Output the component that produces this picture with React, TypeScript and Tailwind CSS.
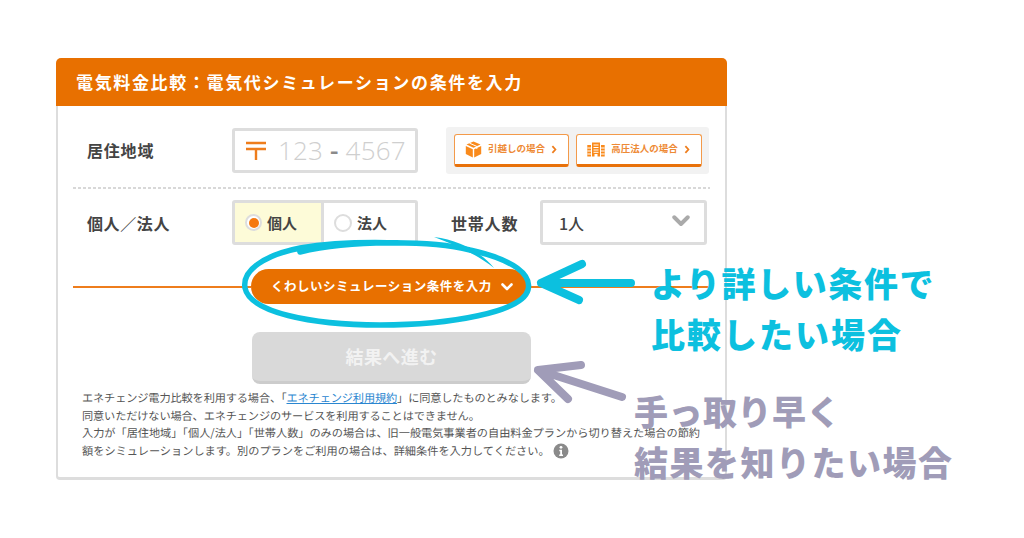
const jp = { fontFamily: '"Noto Sans CJK JP", "Noto Sans", sans-serif' };

function BoxIcon() {
  return (
    <svg width="17" height="17" viewBox="0 0 17 17" className="shrink-0">
      <path d="M8.5 0.5 L15.5 3.5 L8.5 6.8 L1.5 3.5 Z" fill="#f98a1c" />
      <path d="M0.8 5 L7.8 8.2 V16.6 L0.8 13 Z" fill="#f98a1c" />
      <path d="M16.2 5 L9.2 8.2 V16.6 L16.2 13 Z" fill="#f98a1c" />
      <path d="M4.5 2.2 L11.8 5.4 V8" stroke="#fff" strokeWidth="1" fill="none" />
    </svg>
  );
}

function BuildingIcon() {
  return (
    <svg width="18" height="15" viewBox="0 0 18 15" className="shrink-0">
      <path d="M5 0.5 H13 V14.5 H10.5 V12 H7.5 V14.5 H5 Z" fill="#f98a1c" />
      <path d="M6.5 3H11.5M6.5 5.5H11.5M6.5 8H11.5M6.5 10.3H11.5" stroke="#fff" strokeWidth="1" />
      <path d="M0.3 3 H4 V14.5 H0.3 Z M14 3 H17.7 V14.5 H14 Z" fill="#f98a1c" />
      <path d="M0.3 6H4M0.3 9H4M0.3 12H4M14 6H17.7M14 9H17.7M14 12H17.7" stroke="#fff" strokeWidth="1" />
    </svg>
  );
}

function Chevron({ className, stroke, w }: { className?: string; stroke: string; w: number }) {
  return (
    <svg viewBox="0 0 12 8" className={className}>
      <path d="M1.5 1.5 L6 6 L10.5 1.5" fill="none" stroke={stroke} strokeWidth={w} strokeLinecap="round" strokeLinejoin="round" />
    </svg>
  );
}

function Small({ children, width, icon }: { children: React.ReactNode; width: string; icon: React.ReactNode }) {
  return (
    <div className={`${width} h-[33px] flex items-center justify-center gap-[6px] bg-white border border-[#f39a4a] border-b-[3px] border-b-[#e8710a] rounded-[3px]`}>
      {icon}
      <span className="text-[9.5px] font-bold text-[#ee8a35] leading-none">{children}</span>
      <svg viewBox="0 0 6 10" className="w-[6px] h-[9px]">
        <path d="M1.2 1.2 L4.6 5 L1.2 8.8" fill="none" stroke="#ee7d1c" strokeWidth="1.9" />
      </svg>
    </div>
  );
}

export default function App() {
  return (
    <div className="relative w-[1024px] h-[538px] overflow-hidden bg-white pt-[58px] pl-[56px]" style={jp}>
      <div className="w-[671px] flex flex-col">
        <div className="h-[48px] flex items-center pl-[20px] bg-[#e87000] rounded-t-[5px] text-white text-[17px] font-bold tracking-[1.65px] pb-[1px] whitespace-nowrap">
          電気料金比較：電気代シミュレーションの条件を入力
        </div>
        <div className="h-[374px] border-x-[2px] border-b-[3px] border-[#dddddd] rounded-b-[4px] px-[15px]">
          <div className="h-[81px] flex items-center pt-[7px]">
            <div className="w-[159px] pl-[14px] text-[16px] font-bold text-[#444] tracking-[0.8px]">居住地域</div>
            <div className="w-[186px] h-[45px] border-[3px] border-[#dddddd] rounded-[3px] flex items-center pl-[11px]">
              <svg width="20" height="19" viewBox="0 0 20 19" className="shrink-0">
                <path d="M0 2H20M0 8H20M10 8V19" stroke="#ee7d1c" strokeWidth="2.4" fill="none" />
              </svg>
              <span className="ml-[12px] text-[26px] font-light text-[#cfcfcf] tracking-[0.2px] leading-none whitespace-pre" style={{ fontFamily: '"Open Sans", sans-serif' }}>
                123 <span className="font-semibold text-[#8a8a8a]">-</span> 4567
              </span>
            </div>
            <div className="ml-[28px] w-[263px] h-[47px] bg-[#f2f2f2] rounded-[3px] flex items-center justify-center gap-[7px]">
              <Small width="w-[115px]" icon={<BoxIcon />}>引越しの場合</Small>
              <Small width="w-[126px]" icon={<BuildingIcon />}>高圧法人の場合</Small>
            </div>
          </div>
          <div className="h-[2px] bg-[repeating-linear-gradient(90deg,#d8d8d8_0,#d8d8d8_3px,transparent_3px,transparent_5px)]" />
          <div className="mt-[11px] h-[45px] flex items-center">
            <div className="w-[159px] pl-[14px] text-[16px] font-bold text-[#444] tracking-[0.6px]">個人／法人</div>
            <div className="w-[186px] h-[45px] border-[3px] border-[#dddddd] rounded-[3px] flex">
              <div className="w-[89px] bg-[#fdfbd8] border-r-[3px] border-[#dddddd] flex items-center pl-[10px] gap-[5px]">
                <div className="w-[17px] h-[17px] rounded-full border-[2px] border-[#ddd] bg-white flex items-center justify-center">
                  <div className="w-[10px] h-[10px] rounded-full bg-[#f5780f]" />
                </div>
                <span className="pt-[2px] text-[15px] font-bold text-[#444]">個人</span>
              </div>
              <div className="flex-1 flex items-center pl-[10px] gap-[5px]">
                <div className="w-[18px] h-[18px] rounded-full border-[2px] border-[#ddd] bg-white" />
                <span className="pt-[2px] text-[15px] font-bold text-[#444]">法人</span>
              </div>
            </div>
            <div className="ml-[33px] w-[89px] text-[16px] font-bold text-[#444] tracking-[0.8px] whitespace-nowrap">世帯人数</div>
            <div className="w-[167px] h-[45px] border-[3px] border-[#dddddd] rounded-[3px] flex items-center justify-between pl-[16px] pr-[14px]">
              <span className="text-[16px] font-medium text-[#444]">1人</span>
              <Chevron className="w-[18px] h-[12px] mb-[3px]" stroke="#aaaaaa" w={2.6} />
            </div>
          </div>
          <div className="mt-[24px] h-[35px] flex items-center">
            <div className="w-[178px] h-[2px] bg-[#ee7d1c]" />
            <div className="w-[276px] h-[35px] rounded-full bg-[#e87000] flex items-center pl-[20px] gap-[9px]">
              <span className="text-[12.5px] font-bold text-white tracking-[0.52px] whitespace-nowrap">くわしいシミュレーション条件を入力</span>
              <Chevron className="w-[12px] h-[8px] mt-[1px]" stroke="#ffffff" w={2.6} />
            </div>
            <div className="flex-1 h-[2px] bg-[#ee7d1c]" />
          </div>
          <div className="mt-[28px] ml-[179px] w-[279px] h-[52px] rounded-[8px] bg-[#d9d9d9] border-b-[3px] border-[#cccccc] flex items-center justify-center text-[18px] font-bold text-[#f2f2f2] tracking-[0.4px]">
            結果へ進む
          </div>
          <div className="mt-[6px] pl-[9px] w-[640px] text-[11.2px] leading-[17.5px] text-[#555] [text-rendering:geometricPrecision]">
            <p className="whitespace-nowrap tracking-[-0.13px]">エネチェンジ電力比較を利用する場合、「<span className="text-[#2a86d0] underline">エネチェンジ利用規約</span>」に同意したものとみなします。</p>
            <p className="whitespace-nowrap tracking-[-0.13px]">同意いただけない場合、エネチェンジのサービスを利用することはできません。</p>
            <p className="whitespace-nowrap tracking-[-0.03px]">入力が「居住地域」「個人/法人」「世帯人数」のみの場合は、旧一般電気事業者の自由料金プランから切り替えた場合の節約</p>
            <p className="whitespace-nowrap flex items-center">額をシミュレーションします。別のプランをご利用の場合は、詳細条件を入力してください。
              <svg width="16" height="16" viewBox="0 0 16 16" className="ml-[3px]">
                <circle cx="8" cy="8" r="7.5" fill="#8a8a8a" />
                <circle cx="8" cy="4.3" r="1.4" fill="#fff" />
                <path d="M6.3 6.8H9V11.6H10V13H6.2V11.6H7.2V8.2H6.3Z" fill="#fff" />
              </svg>
            </p>
          </div>
        </div>
      </div>

      <svg className="absolute left-0 top-0 pointer-events-none" width="1024" height="538" viewBox="0 0 1024 538">
        <path d="M300 252 C350 240 430 240 470 250 C515 260 532 275 528 290 C522 312 450 325 380 325 C310 325 250 312 245 288 C242 270 265 255 300 248 C 330 243 370 242 400 243" fill="none" stroke="#0cc0df" strokeWidth="5.5" strokeLinecap="round" />
        <path d="M434 237 C460 240 482 253 494 268 C478 255 456 245 434 237 Z" fill="#0cc0df" />
        <path d="M631 283 H541 M582 264 L541 283 L579 300" fill="none" stroke="#0cc0df" strokeWidth="8" strokeLinecap="round" strokeLinejoin="round" />
        <path d="M622 397 L538 370 M581 365 L538 370 L568 399" fill="none" stroke="#a09cb8" strokeWidth="8" strokeLinecap="round" strokeLinejoin="round" />
      </svg>

      <div className="absolute left-[651px] top-[257px] text-[34px] font-black text-[#0cc0df] leading-[51px] whitespace-nowrap">
        <div className="tracking-[1.6px]">より詳しい条件で</div>
        <div className="tracking-[2px]">比較したい場合</div>
      </div>
      <div className="absolute left-[634px] top-[385px] text-[34px] font-black text-[#a09cb8] leading-[51px] whitespace-nowrap">
        <div className="tracking-[0.5px]">手っ取り早く</div>
        <div className="tracking-[1.5px]">結果を知りたい場合</div>
      </div>
    </div>
  );
}
